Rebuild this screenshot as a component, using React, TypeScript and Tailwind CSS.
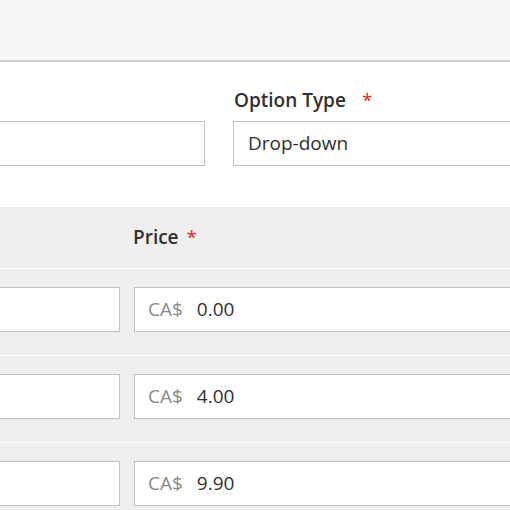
import React from "react";

const font = { fontFamily: '"Open Sans", "Noto Sans", sans-serif' };

function PriceRow({ value }: { value: string }) {
  return (
    <div className="flex border-t border-white pt-[18px] pb-[23px] -ml-[200px]">
      <div className="w-[320px] h-[45px] shrink-0 bg-white border border-[#c2c2c2]" />
      <div className="ml-[14px] w-[420px] h-[45px] shrink-0 bg-white border border-[#c2c2c2] flex items-center pl-[13px] text-[19px]">
        <span className="text-[#8a8a8a]">CA$</span>
        <span className="ml-[14px] text-[#303030]">{value}</span>
      </div>
    </div>
  );
}

export default function App() {
  return (
    <div className="w-[510px] h-[510px] overflow-hidden bg-white" style={font}>
      <div className="h-[62px] bg-[#f8f8f8] border-b-2 border-[#d2d2d2]" />
      <div className="flex -ml-[100px] pt-[27px] gap-[28px]">
        <div className="w-[305px] shrink-0 flex flex-col">
          <div className="h-[23px]" />
          <div className="mt-[9px] h-[45px] border border-[#c2c2c2] bg-white" />
        </div>
        <div className="w-[400px] shrink-0 flex flex-col">
          <div className="h-[23px] leading-[23px] text-[19px] font-semibold text-[#303030] pl-[1px] flex">
            <span>Option Type</span>
            <span className="ml-[16px] text-[#e22626] font-normal">*</span>
          </div>
          <div className="mt-[9px] h-[45px] border border-[#c2c2c2] bg-white flex items-center pl-[14px] text-[19px] text-[#303030]">
            Drop-down
          </div>
        </div>
      </div>
      <div className="mt-[41px] bg-[#efefef]">
        <div className="h-[61px] flex items-center pl-[133px]">
          <div className="leading-[23px] text-[19px] font-semibold text-[#303030] flex">
            <span>Price</span>
            <span className="ml-[8px] text-[#e22626] font-normal">*</span>
          </div>
        </div>
        <PriceRow value="0.00" />
        <PriceRow value="4.00" />
        <PriceRow value="9.90" />
      </div>
    </div>
  );
}
